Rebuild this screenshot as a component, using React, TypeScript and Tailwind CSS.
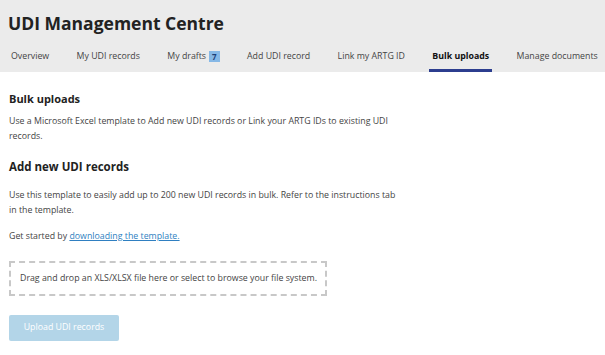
import React from "react";

const tabs = [
  {label: "Overview"},
  {label: "My UDI records"},
  {label: "My drafts", badge: "7"},
  {label: "Add UDI record"},
  {label: "Link my ARTG ID"},
  {label: "Bulk uploads", active: true},
  {label: "Manage documents"},
];

const App: React.FC = () => {
  return (
    <div
      className="min-h-[355px] w-[605px] overflow-hidden bg-white text-[#333]"
      style={{fontFamily: '"Open Sans", "Noto Sans", sans-serif'}}
    >
      {/* Header */}
      <div className="h-[72px] bg-[#ebebeb] px-[8px]">
        <h1 className="pt-[10px] text-[17.5px] font-bold leading-[26px] text-[#222]">
          UDI Management Centre
        </h1>
        <nav className="mt-[11px] flex gap-[21.4px]">
          {tabs.map((t) => (
            <div
              key={t.label}
              className={`flex h-[25px] shrink-0 items-start whitespace-nowrap border-b-[3px] px-[3px] pt-[3px] text-[8.8px] ${
                t.active
                  ? "border-[#2c3e8f] font-bold text-[#111]"
                  : "border-transparent text-[#444]"
              }`}
            >
              <span>{t.label}</span>
              {t.badge && (
                <span className="ml-[3px] mt-[1px] bg-[#86b8e6] px-[3px] text-[8px] font-bold leading-[11px] text-[#1d3f78]">
                  {t.badge}
                </span>
              )}
            </div>
          ))}
        </nav>
      </div>

      {/* Content */}
      <div className="w-[410px] px-[9px]">
        <h2 className="mt-[19px] text-[11px] font-bold leading-[16px] text-[#222]">
          Bulk uploads
        </h2>
        <p className="mt-[7px] text-[8.8px] leading-[15px] text-[#444]">
          Use a Microsoft Excel template to Add new UDI records or Link your
          ARTG IDs to existing UDI records.
        </p>

        <h2 className="mt-[15px] text-[11.5px] font-bold leading-[16px] text-[#222]">
          Add new UDI records
        </h2>
        <p className="mt-[13px] text-[8.8px] leading-[15px] text-[#444]">
          Use this template to easily add up to 200 new UDI records in bulk.
          Refer to the instructions tab in the template.
        </p>
        <p className="mt-[11px] text-[8.8px] leading-[15px] text-[#444]">
          Get started by{" "}
          <a href="#" className="text-[#2f7fc1] underline">
            downloading the template.
          </a>
        </p>

        <div className="mt-[17px] flex h-[35px] w-[318px] items-center whitespace-nowrap border-2 border-dashed border-[#c8c8c8] px-[9px] text-[8.8px] leading-[15px] text-[#444]">
          Drag and drop an XLS/XLSX file here or select to browse your file
          system.
        </div>

        <button
          disabled
          className="mt-[19px] h-[26px] w-[110px] rounded-[2px] bg-[#b3d5e8] text-[8.8px] text-white"
        >
          Upload UDI records
        </button>
      </div>
    </div>
  );
};

export default App;
